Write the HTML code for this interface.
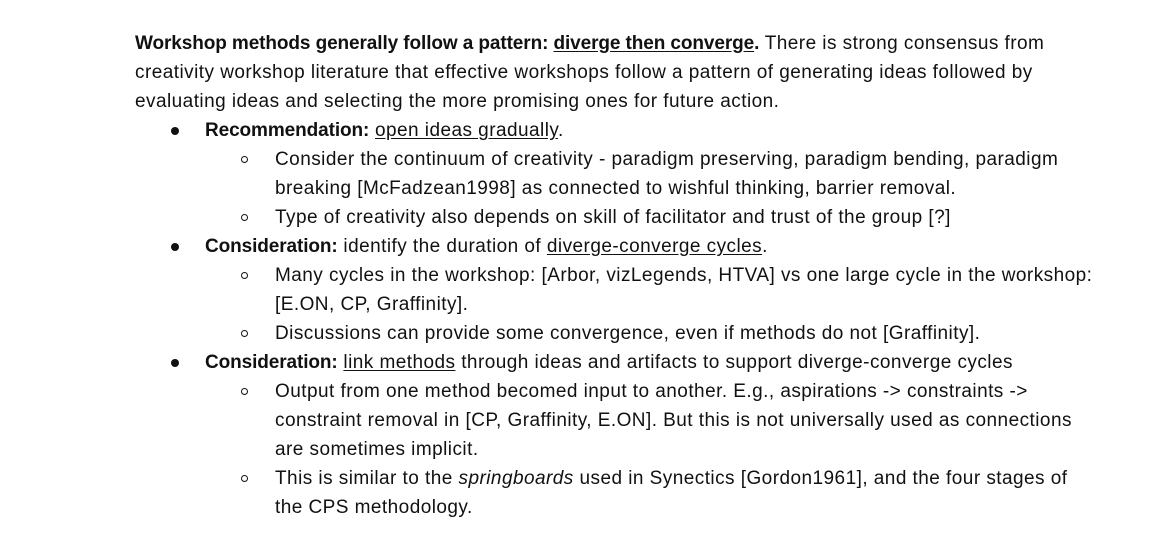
<!DOCTYPE html>
<html><head><meta charset="utf-8"><style>
body{margin:0;background:#fff;width:1166px;height:540px;overflow:hidden;font-family:"Liberation Sans",sans-serif;font-size:19px;letter-spacing:0.45px;color:#111;}
.l{position:absolute;white-space:nowrap;line-height:29px;height:29px;}
b{letter-spacing:-0.1px}
u{text-decoration:underline;text-underline-offset:2px}
.b1{position:absolute;width:8px;height:8px;border-radius:50%;background:#111;}
.b2{position:absolute;width:7px;height:7px;border-radius:50%;border:1.2px solid #111;box-sizing:border-box;}
</style></head><body>
<div class="l" style="left:135px;top:29px"><b>Workshop methods generally follow a pattern: <u>diverge then converge</u>.</b> There is strong consensus from</div>
<div class="l" style="left:135px;top:58px">creativity workshop literature that effective workshops follow a pattern of generating ideas followed by</div>
<div class="l" style="left:135px;top:87px">evaluating ideas and selecting the more promising ones for future action.</div>
<div class="b1" style="left:171px;top:127px"></div>
<div class="l" style="left:205px;top:116px"><b>Recommendation:</b> <u>open ideas gradually</u>.</div>
<div class="b2" style="left:241px;top:156px"></div>
<div class="l" style="left:275px;top:145px">Consider the continuum of creativity - paradigm preserving, paradigm bending, paradigm</div>
<div class="l" style="left:275px;top:174px">breaking [McFadzean1998] as connected to wishful thinking, barrier removal.</div>
<div class="b2" style="left:241px;top:214px"></div>
<div class="l" style="left:275px;top:203px">Type of creativity also depends on skill of facilitator and trust of the group [?]</div>
<div class="b1" style="left:171px;top:243px"></div>
<div class="l" style="left:205px;top:232px"><b>Consideration:</b> identify the duration of <u>diverge-converge cycles</u>.</div>
<div class="b2" style="left:241px;top:272px"></div>
<div class="l" style="left:275px;top:261px">Many cycles in the workshop: [Arbor, vizLegends, HTVA] vs one large cycle in the workshop:</div>
<div class="l" style="left:275px;top:290px">[E.ON, CP, Graffinity].</div>
<div class="b2" style="left:241px;top:330px"></div>
<div class="l" style="left:275px;top:319px">Discussions can provide some convergence, even if methods do not [Graffinity].</div>
<div class="b1" style="left:171px;top:359px"></div>
<div class="l" style="left:205px;top:348px"><b>Consideration:</b> <u>link methods</u> through ideas and artifacts to support diverge-converge cycles</div>
<div class="b2" style="left:241px;top:388px"></div>
<div class="l" style="left:275px;top:377px">Output from one method becomed input to another. E.g., aspirations -&gt; constraints -&gt;</div>
<div class="l" style="left:275px;top:406px">constraint removal in [CP, Graffinity, E.ON]. But this is not universally used as connections</div>
<div class="l" style="left:275px;top:435px">are sometimes implicit.</div>
<div class="b2" style="left:241px;top:475px"></div>
<div class="l" style="left:275px;top:464px">This is similar to the <i>springboards</i> used in Synectics [Gordon1961], and the four stages of</div>
<div class="l" style="left:275px;top:493px">the CPS methodology.</div>
</body></html>
